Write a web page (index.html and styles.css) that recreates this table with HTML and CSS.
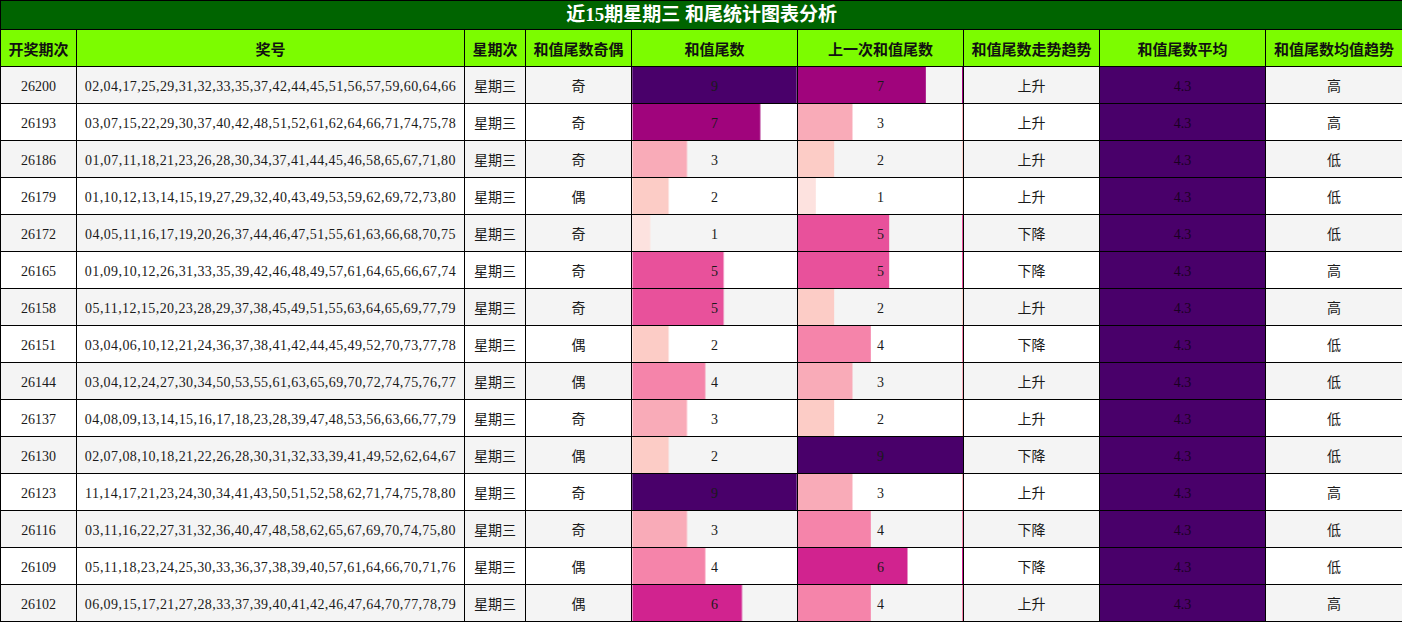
FILE: index.html
```html
<!DOCTYPE html>
<html lang="zh">
<head>
<meta charset="utf-8">
<title>近15期星期三 和尾统计图表分析</title>
<link rel="stylesheet" href="styles.css">
</head>
<body>
<table class="stats">
<colgroup>
<col class="c-period"><col class="c-nums"><col class="c-week"><col class="c-odd"><col class="c-tail"><col class="c-prev"><col class="c-trend"><col class="c-avg"><col class="c-avgtrend">
</colgroup>
<thead>
<tr class="title-row"><th colspan="9">近15期星期三 和尾统计图表分析</th></tr>
<tr class="head-row"><th>开奖期次</th><th>奖号</th><th>星期次</th><th>和值尾数奇偶</th><th>和值尾数</th><th>上一次和值尾数</th><th>和值尾数走势趋势</th><th>和值尾数平均</th><th>和值尾数均值趋势</th></tr>
</thead>
<tbody>
<tr><td>26200</td><td class="nums">02,04,17,25,29,31,32,33,35,37,42,44,45,51,56,57,59,60,64,66</td><td>星期三</td><td>奇</td><td class="bar" style="--w:100%;--c:#49006a">9</td><td class="bar prev" style="--w:77.78%;--c:#a0047c">7</td><td>上升</td><td class="avg">4.3</td><td>高</td></tr>
<tr><td>26193</td><td class="nums">03,07,15,22,29,30,37,40,42,48,51,52,61,62,64,66,71,74,75,78</td><td>星期三</td><td>奇</td><td class="bar" style="--w:77.78%;--c:#a0047c">7</td><td class="bar prev" style="--w:33.33%;--c:#f9abb8">3</td><td>上升</td><td class="avg">4.3</td><td>高</td></tr>
<tr><td>26186</td><td class="nums">01,07,11,18,21,23,26,28,30,34,37,41,44,45,46,58,65,67,71,80</td><td>星期三</td><td>奇</td><td class="bar" style="--w:33.33%;--c:#f9abb8">3</td><td class="bar prev" style="--w:22.22%;--c:#fcccc6">2</td><td>上升</td><td class="avg">4.3</td><td>低</td></tr>
<tr><td>26179</td><td class="nums">01,10,12,13,14,15,19,27,29,32,40,43,49,53,59,62,69,72,73,80</td><td>星期三</td><td>偶</td><td class="bar" style="--w:22.22%;--c:#fcccc6">2</td><td class="bar prev" style="--w:11.11%;--c:#fde2df">1</td><td>上升</td><td class="avg">4.3</td><td>低</td></tr>
<tr><td>26172</td><td class="nums">04,05,11,16,17,19,20,26,37,44,46,47,51,55,61,63,66,68,70,75</td><td>星期三</td><td>奇</td><td class="bar" style="--w:11.11%;--c:#fde2df">1</td><td class="bar prev" style="--w:55.56%;--c:#e8519b">5</td><td>下降</td><td class="avg">4.3</td><td>低</td></tr>
<tr><td>26165</td><td class="nums">01,09,10,12,26,31,33,35,39,42,46,48,49,57,61,64,65,66,67,74</td><td>星期三</td><td>奇</td><td class="bar" style="--w:55.56%;--c:#e8519b">5</td><td class="bar prev" style="--w:55.56%;--c:#e8519b">5</td><td>下降</td><td class="avg">4.3</td><td>高</td></tr>
<tr><td>26158</td><td class="nums">05,11,12,15,20,23,28,29,37,38,45,49,51,55,63,64,65,69,77,79</td><td>星期三</td><td>奇</td><td class="bar" style="--w:55.56%;--c:#e8519b">5</td><td class="bar prev" style="--w:22.22%;--c:#fcccc6">2</td><td>上升</td><td class="avg">4.3</td><td>高</td></tr>
<tr><td>26151</td><td class="nums">03,04,06,10,12,21,24,36,37,38,41,42,44,45,49,52,70,73,77,78</td><td>星期三</td><td>偶</td><td class="bar" style="--w:22.22%;--c:#fcccc6">2</td><td class="bar prev" style="--w:44.44%;--c:#f584aa">4</td><td>下降</td><td class="avg">4.3</td><td>低</td></tr>
<tr><td>26144</td><td class="nums">03,04,12,24,27,30,34,50,53,55,61,63,65,69,70,72,74,75,76,77</td><td>星期三</td><td>偶</td><td class="bar" style="--w:44.44%;--c:#f584aa">4</td><td class="bar prev" style="--w:33.33%;--c:#f9abb8">3</td><td>上升</td><td class="avg">4.3</td><td>低</td></tr>
<tr><td>26137</td><td class="nums">04,08,09,13,14,15,16,17,18,23,28,39,47,48,53,56,63,66,77,79</td><td>星期三</td><td>奇</td><td class="bar" style="--w:33.33%;--c:#f9abb8">3</td><td class="bar prev" style="--w:22.22%;--c:#fcccc6">2</td><td>上升</td><td class="avg">4.3</td><td>低</td></tr>
<tr><td>26130</td><td class="nums">02,07,08,10,18,21,22,26,28,30,31,32,33,39,41,49,52,62,64,67</td><td>星期三</td><td>偶</td><td class="bar" style="--w:22.22%;--c:#fcccc6">2</td><td class="bar prev" style="--w:100%;--c:#49006a">9</td><td>下降</td><td class="avg">4.3</td><td>低</td></tr>
<tr><td>26123</td><td class="nums">11,14,17,21,23,24,30,34,41,43,50,51,52,58,62,71,74,75,78,80</td><td>星期三</td><td>奇</td><td class="bar" style="--w:100%;--c:#49006a">9</td><td class="bar prev" style="--w:33.33%;--c:#f9abb8">3</td><td>上升</td><td class="avg">4.3</td><td>高</td></tr>
<tr><td>26116</td><td class="nums">03,11,16,22,27,31,32,36,40,47,48,58,62,65,67,69,70,74,75,80</td><td>星期三</td><td>奇</td><td class="bar" style="--w:33.33%;--c:#f9abb8">3</td><td class="bar prev" style="--w:44.44%;--c:#f584aa">4</td><td>下降</td><td class="avg">4.3</td><td>低</td></tr>
<tr><td>26109</td><td class="nums">05,11,18,23,24,25,30,33,36,37,38,39,40,57,61,64,66,70,71,76</td><td>星期三</td><td>偶</td><td class="bar" style="--w:44.44%;--c:#f584aa">4</td><td class="bar prev" style="--w:66.67%;--c:#d1238f">6</td><td>下降</td><td class="avg">4.3</td><td>低</td></tr>
<tr><td>26102</td><td class="nums">06,09,15,17,21,27,28,33,37,39,40,41,42,46,47,64,70,77,78,79</td><td>星期三</td><td>偶</td><td class="bar" style="--w:66.67%;--c:#d1238f">6</td><td class="bar prev" style="--w:44.44%;--c:#f584aa">4</td><td>上升</td><td class="avg">4.3</td><td>高</td></tr>
</tbody>
</table>
</body>
</html>
```
FILE: styles.css
```css
html, body {
  margin: 0;
  padding: 0;
  background: #ffffff;
}

.stats {
  border-collapse: collapse;
  table-layout: fixed;
  width: 1402px;
  font-family: "Liberation Serif", "Noto Sans CJK SC", serif;
  font-size: 14px;
  color: #1a1a1a;
}

.c-period { width: 76px; }
.c-nums { width: 388px; }
.c-week { width: 61px; }
.c-odd { width: 106px; }
.c-tail { width: 166px; }
.c-prev { width: 166px; }
.c-trend { width: 136px; }
.c-avg { width: 166px; }
.c-avgtrend { width: 137px; }

.stats th,
.stats td {
  border: 1px solid #000000;
  padding: 0;
  text-align: center;
  vertical-align: middle;
  white-space: nowrap;
  overflow: hidden;
}

.title-row th {
  height: 28px;
  background: #006400;
  color: #ffffff;
  font-size: 19px;
  font-weight: bold;
  line-height: 28px;
}

.head-row th {
  height: 36px;
  background: #7cfc00;
  color: #111111;
  font-size: 15px;
  font-weight: bold;
  font-family: "Noto Sans CJK SC", "Liberation Sans", sans-serif;
}

.stats td {
  height: 37px;
  line-height: 20px;
  padding-top: 3px;
  box-sizing: border-box;
}

.stats tbody tr:nth-child(odd) td {
  background-color: #f4f4f4;
}

.stats tbody tr:nth-child(even) td {
  background-color: #ffffff;
}

.stats td.nums {
  letter-spacing: 0.42px;
}

.stats tbody tr td.bar {
  background-image: linear-gradient(90deg, var(--c) 0, var(--c) calc(var(--w) - 1px), transparent var(--w));
}

.stats tbody tr td.prev {
  background-image:
    linear-gradient(var(--c), var(--c)),
    linear-gradient(90deg, var(--c) 0, var(--c) calc(var(--w) - 1px), transparent var(--w));
  background-size: 1px 100%, 100% 100%;
  background-position: right top, left top;
  background-repeat: no-repeat;
}

.stats tbody tr td.avg {
  background-color: #49006a;
  color: #1a0022;
}
```
